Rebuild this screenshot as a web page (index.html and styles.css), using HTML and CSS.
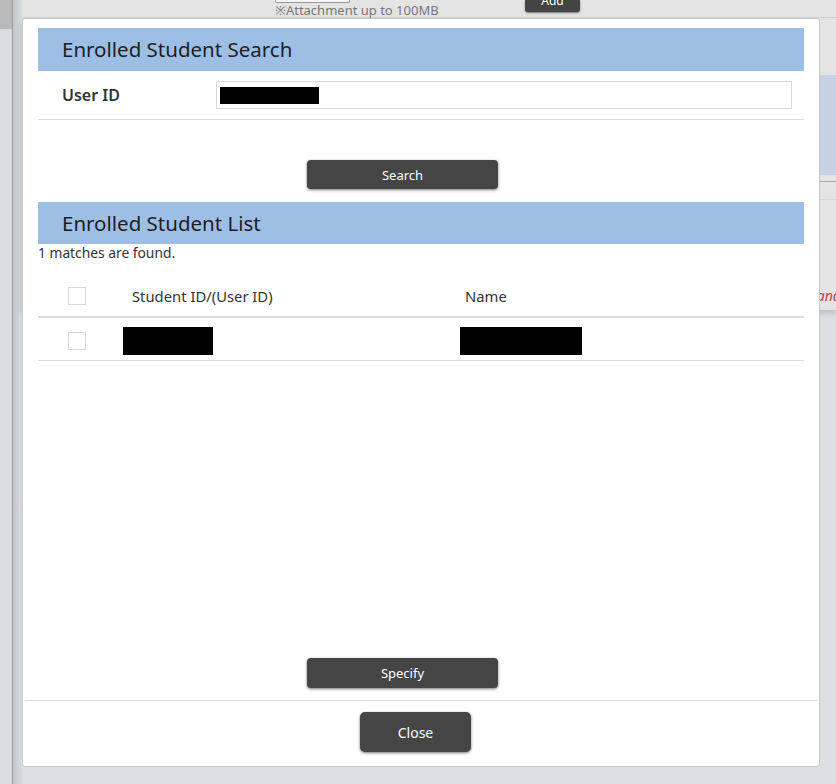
FILE: index.html
```html
<!DOCTYPE html>
<html lang="en">
<head>
<meta charset="utf-8">
<title>Enrolled Student Search</title>
<link rel="stylesheet" href="styles.css">
</head>
<body>
<div class="page">
  <div class="side"><div class="side-top"></div></div>
  <div class="divider"></div>
  <div class="gutter"></div>
  <div class="main">
    <div class="topbar">
      <div class="attach">
        <div class="file-box"></div>
        <div class="attach-note">※Attachment up to 100MB</div>
      </div>
      <div class="add-btn">Add</div>
    </div>
    <div class="bg-row">
      <div class="bg-blue"></div>
      <div class="bg-lines"></div>
      <div class="bg-note">Standard</div>
    </div>
  </div>
</div>

<div class="modal">
  <div class="modal-body">
    <h2 class="band">Enrolled Student Search</h2>
    <div class="form-row">
      <label class="form-label">User ID</label>
      <div class="input"><span class="redact redact-input"></span></div>
    </div>
    <div class="btn-row btn-row-search">
      <button class="btn btn-wide">Search</button>
    </div>
    <h2 class="band band-list">Enrolled Student List</h2>
    <div class="count">1 matches are found.</div>
    <div class="table">
      <div class="thead">
        <div class="cell cell-check"><span class="check"></span></div>
        <div class="cell cell-id">Student ID/(User ID)</div>
        <div class="cell cell-name">Name</div>
      </div>
      <div class="trow">
        <div class="cell cell-check"><span class="check"></span></div>
        <div class="cell cell-id-data"><span class="redact redact-id"></span></div>
        <div class="cell cell-name-data"><span class="redact redact-name"></span></div>
      </div>
    </div>
    <div class="spacer"></div>
    <div class="btn-row btn-row-specify">
      <button class="btn btn-wide">Specify</button>
    </div>
  </div>
  <div class="modal-footer">
    <button class="btn btn-close">Close</button>
  </div>
</div>
</body>
</html>
```
FILE: styles.css
```css
html, body {
  margin: 0;
  padding: 0;
}
body {
  width: 836px;
  height: 784px;
  overflow: hidden;
  background: #dcdfe2;
  font-family: "Noto Sans", "Liberation Sans", sans-serif;
  color: #222;
  position: relative;
}

/* dimmed background page */
.page {
  display: flex;
  height: 784px;
}
.side {
  width: 12px;
  background: #d9dcdf;
}
.side-top {
  height: 29px;
  background: #bababa;
}
.divider {
  width: 1px;
  background: #9b9b9b;
}
.gutter {
  width: 9px;
  background: linear-gradient(to right, #c4c6c8, #d8dbde);
}
.main {
  flex: 1;
  display: flex;
  flex-direction: column;
}
.topbar {
  height: 17px;
  background: #e4e4e4;
  border-bottom: 1px solid #d0d0d0;
  display: flex;
  align-items: flex-start;
  padding-left: 253px;
}
.attach {
  display: flex;
  flex-direction: column;
  width: 250px;
}
.file-box {
  width: 73px;
  height: 2px;
  border: 1px solid #999;
  border-top: none;
  border-radius: 0 0 2px 2px;
  background: #f4f4f4;
}
.attach-note {
  font-size: 13px;
  line-height: 14px;
  color: #777;
}
.add-btn {
  width: 55px;
  height: 12px;
  background: #444;
  border-radius: 0 0 3px 3px;
  box-shadow: 0 1px 2px rgba(0,0,0,.5);
  color: #fff;
  font-size: 12px;
  line-height: 2px;
  text-align: center;
  overflow: hidden;
}
.bg-row {
  background: #e4e4e4;
  height: 292px;
  display: flex;
  flex-direction: column;
  align-items: flex-end;
  box-shadow: 0 4px 5px rgba(0,0,0,.12);
}
.bg-blue {
  margin-top: 57px;
  width: 40px;
  height: 100px;
  background: #c6d2e3;
}
.bg-lines {
  margin-top: 6px;
  width: 40px;
  height: 17px;
  border-top: 1px solid #a9a9a9;
  border-bottom: 1px solid #d4d4d4;
}
.bg-note {
  margin-top: 86px;
  width: 31px;
  font-size: 14px;
  font-style: italic;
  color: #b04848;
  white-space: nowrap;
  overflow: hidden;
}

/* modal */
.modal {
  position: absolute;
  left: 22px;
  top: 18px;
  width: 796px;
  height: 747px;
  background: #fff;
  border: 1px solid #c9c9c9;
  border-radius: 3px;
  display: flex;
  flex-direction: column;
}
.modal-body {
  flex: 1;
  display: flex;
  flex-direction: column;
  padding: 9px 15px 0;
}
.band {
  margin: 0;
  height: 43px;
  line-height: 43px;
  padding-left: 24px;
  background: #9dbfe5;
  font-size: 20.5px;
  font-weight: 400;
  color: #1e1e1e;
}
.band-list {
  height: 42px;
  line-height: 42px;
}
.form-row {
  display: flex;
  align-items: center;
  height: 48px;
  border-bottom: 1px solid #dcdcdc;
}
.form-label {
  width: 154px;
  padding-left: 24px;
  font-size: 16px;
  font-weight: 600;
  color: #333;
}
.input {
  width: 571px;
  height: 26px;
  border: 1px solid #dadada;
  display: flex;
  align-items: center;
  padding-left: 3px;
}
.redact {
  display: block;
  background: #000;
}
.redact-input {
  width: 99px;
  height: 17px;
}
.btn-row {
  display: flex;
  padding-left: 269px;
}
.btn-row-search {
  padding-top: 40px;
  padding-bottom: 13px;
}
.btn {
  font-family: "Noto Sans", "Liberation Sans", sans-serif;
  background: #444544;
  color: #fff;
  border: none;
  border-radius: 4px;
  box-shadow: 0 1px 3px rgba(0,0,0,.55);
  font-size: 13px;
  padding: 0;
  cursor: pointer;
}
.btn-wide {
  width: 191px;
  height: 29px;
}
.count {
  font-size: 13.8px;
  line-height: 17px;
  color: #333;
}
.table {
  display: flex;
  flex-direction: column;
}
.thead, .trow {
  display: flex;
  align-items: center;
  box-sizing: border-box;
}
.thead {
  height: 57px;
  padding-top: 15px;
  border-bottom: 2px solid #dcdcdc;
}
.trow {
  height: 43px;
  padding-top: 3px;
  border-bottom: 1px solid #dcdcdc;
}
.cell-check {
  width: 94px;
  padding-left: 30px;
  box-sizing: border-box;
  display: flex;
  align-items: center;
}
.check {
  display: block;
  width: 16px;
  height: 16px;
  border: 1px solid #d8d8d8;
}
.cell-id {
  width: 333px;
  font-size: 14.8px;
  color: #333;
}
.cell-name {
  font-size: 14.8px;
  color: #333;
}
.trow .cell-check {
  width: 85px;
}
.cell-id-data {
  width: 337px;
}
.redact-id {
  width: 90px;
  height: 28px;
}
.redact-name {
  width: 122px;
  height: 28px;
}
.spacer {
  flex: 1;
}
.btn-row-specify {
  padding-bottom: 12px;
}
.btn-row-specify .btn-wide {
  height: 30px;
}
.modal-footer {
  margin: 0 2px;
  border-top: 1px solid #dcdcdc;
  height: 66px;
  display: flex;
  padding-top: 11px;
  padding-left: 335px;
  box-sizing: border-box;
}
.btn-close {
  width: 111px;
  height: 40px;
  border-radius: 5px;
  font-size: 14px;
}
```
